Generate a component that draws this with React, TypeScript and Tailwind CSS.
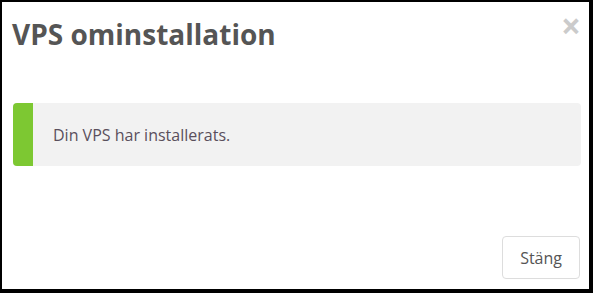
import React from 'react';

// Modal: VPS reinstall done

export default function App() {
  return (
    <div
      className="w-[593px] h-[293px] bg-white border-t-2 border-l-2 border-r-4 border-b-4 border-black flex flex-col"
      style={{ fontFamily: '"Open Sans", "Liberation Sans", sans-serif' }}
    >
      {/* header */}
      <div className="flex items-start justify-between pl-[10px] pr-[8px] pt-[14px]">
        <h4 className="text-[28px] leading-[36px] font-bold text-[#555555]">VPS ominstallation</h4>
        <button aria-label="Stäng" className="mt-[-8px] text-[35px] leading-none font-bold text-black opacity-20">
          ×
        </button>
      </div>

      {/* body */}
      <div className="pl-[11px] pr-[8px] pt-[51px]">
        <div className="flex h-[63px] rounded-[4px] bg-[#f2f2f2] overflow-hidden">
          <div className="w-[20px] bg-[#7dc832]" />
          <div className="flex items-center pl-[20px] text-[16px] text-[#5a4f5c]">Din VPS har installerats.</div>
        </div>
      </div>

      {/* footer */}
      <div className="mt-auto flex justify-end px-[9px] pb-[10px]">
        <button className="h-[43px] px-[17px] rounded-[4px] border border-[#dddddd] bg-white text-[16px] text-[#555555]">
          Stäng
        </button>
      </div>
    </div>
  );
}
